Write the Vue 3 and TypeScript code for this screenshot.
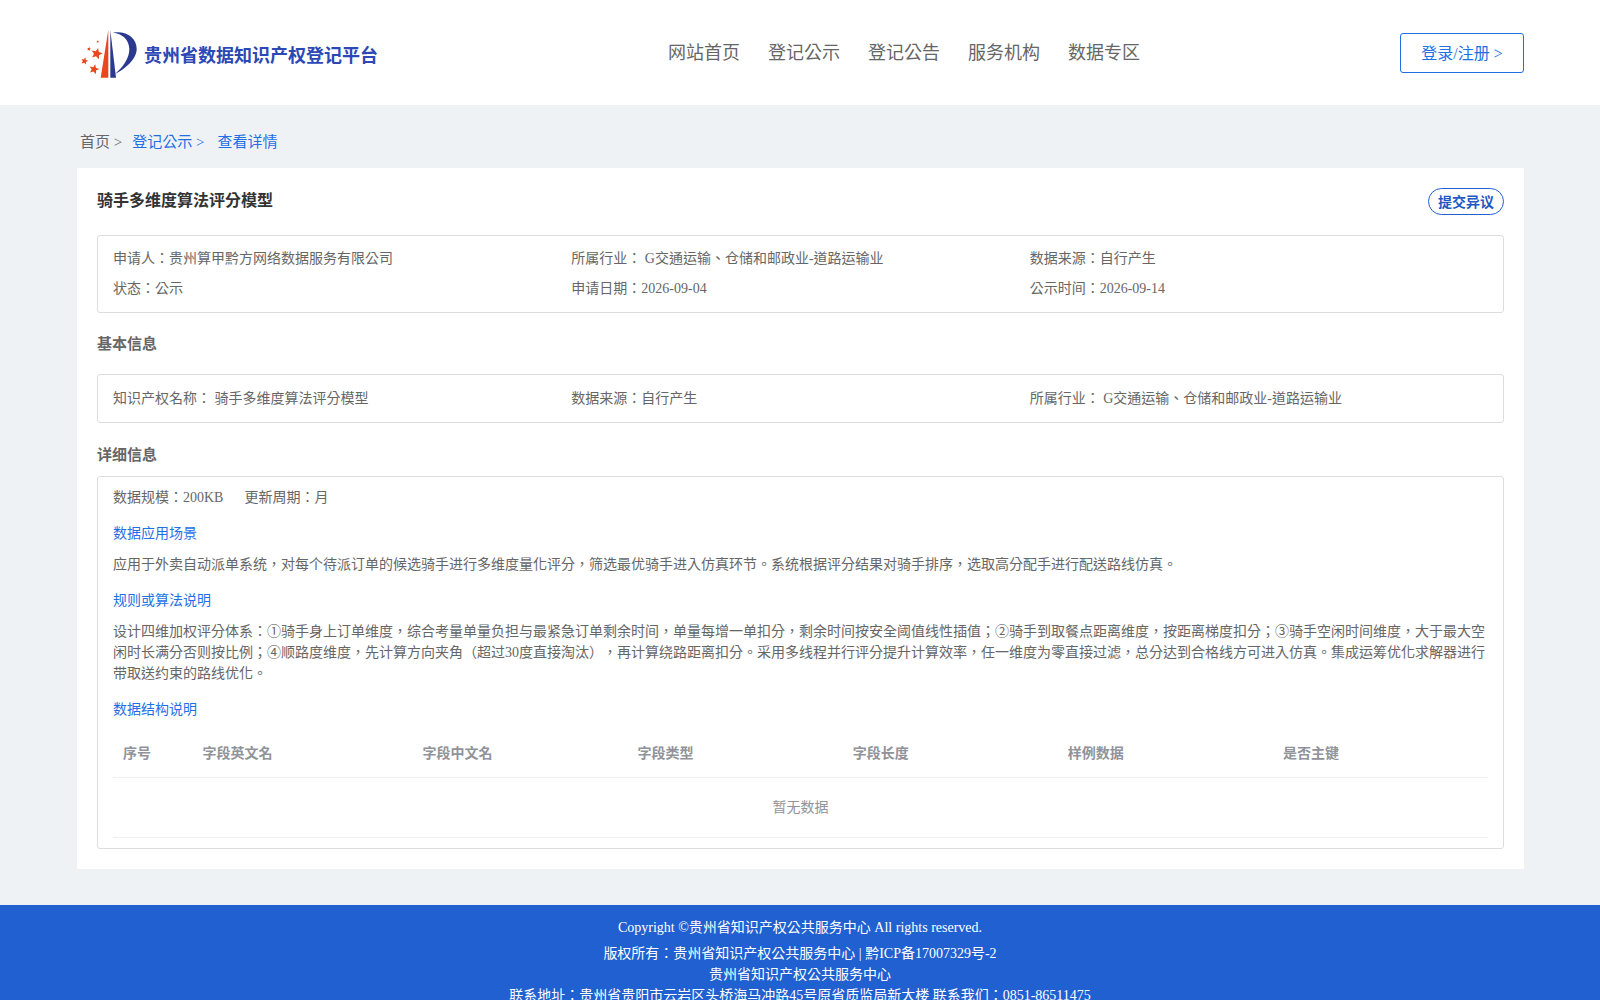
<template>
  <div class="page">
    <header class="header">
      <div class="brand">
        <svg class="logo" viewBox="0 0 60 56" width="60" height="56">
          <path d="M20.700 51.700 L28.300 4 L28.300 51.700 Z" fill="#e8471c" />
          <path d="M30.300 4 L36 51.700 L30.300 51.700 Z" fill="#2b3a8f" />
          <path d="M33 6.500 C47 4.500 56.700 12 56.700 23 C56.700 33 45 43 35 48 C43 41 49.500 32 49.300 23 C49 13 42 8 33 6.500 Z" fill="#2b3a8f" />
          <polygon v-for="s in stars" :key="s.x" :points="starPoints(s.x, s.y, s.r)" fill="#e8471c" />
        </svg>
        <span class="brand-name">贵州省数据知识产权登记平台</span>
      </div>
      <nav class="nav">
        <a v-for="item in navItems" :key="item">{{ item }}</a>
      </nav>
      <button class="login">登录/注册 &gt;</button>
    </header>

    <main class="main">
      <div class="crumbs">
        <span>首页 &gt;</span>
        <span class="link">登记公示 &gt;</span>
        <span class="link last">查看详情</span>
      </div>

      <section class="card">
        <div class="title-row">
          <h1>骑手多维度算法评分模型</h1>
          <button class="objection">提交异议</button>
        </div>

        <div class="box summary">
          <div v-for="text in summary" :key="text">{{ text }}</div>
        </div>

        <h2 class="basic-title">基本信息</h2>
        <div class="box basic">
          <div v-for="text in basic" :key="text">{{ text }}</div>
        </div>

        <h2 class="detail-title">详细信息</h2>
        <div class="box detail">
          <div class="meta"><span>数据规模：200KB</span><span>更新周期：月</span></div>
          <h3>数据应用场景</h3>
          <p>应用于外卖自动派单系统，对每个待派订单的候选骑手进行多维度量化评分，筛选最优骑手进入仿真环节。系统根据评分结果对骑手排序，选取高分配手进行配送路线仿真。</p>
          <h3>规则或算法说明</h3>
          <p>设计四维加权评分体系：①骑手身上订单维度，综合考量单量负担与最紧急订单剩余时间，单量每增一单扣分，剩余时间按安全阈值线性插值；②骑手到取餐点距离维度，按距离梯度扣分；③骑手空闲时间维度，大于最大空闲时长满分否则按比例；④顺路度维度，先计算方向夹角（超过30度直接淘汰），再计算绕路距离扣分。采用多线程并行评分提升计算效率，任一维度为零直接过滤，总分达到合格线方可进入仿真。集成运筹优化求解器进行带取送约束的路线优化。</p>
          <h3>数据结构说明</h3>
          <div class="table">
            <div class="table-head">
              <span v-for="col in columns" :key="col">{{ col }}</span>
            </div>
            <div class="table-empty">暂无数据</div>
          </div>
        </div>
      </section>
    </main>

    <footer class="footer">
      <div class="copyright">Copyright ©贵州省知识产权公共服务中心 All rights reserved.</div>
      <div>版权所有：贵州省知识产权公共服务中心 | 黔ICP备17007329号-2</div>
      <div>贵州省知识产权公共服务中心</div>
      <div>联系地址：贵州省贵阳市云岩区头桥海马冲路45号原省质监局新大楼 联系我们：0851-86511475</div>
    </footer>
  </div>
</template>

<script setup lang="ts">
const navItems = ['网站首页', '登记公示', '登记公告', '服务机构', '数据专区']

const summary = [
  '申请人：贵州算甲黔方网络数据服务有限公司',
  '所属行业： G交通运输、仓储和邮政业-道路运输业',
  '数据来源：自行产生',
  '状态：公示',
  '申请日期：2026-09-04',
  '公示时间：2026-09-14'
]

const basic = [
  '知识产权名称： 骑手多维度算法评分模型',
  '数据来源：自行产生',
  '所属行业： G交通运输、仓储和邮政业-道路运输业'
]

const columns = ['序号', '字段英文名', '字段中文名', '字段类型', '字段长度', '样例数据', '是否主键']

// logo stars, in svg units
const stars = [
  { x: 16.700, y: 27.700, r: 6 },
  { x: 4.500, y: 35, r: 3.800 },
  { x: 14, y: 43.300, r: 5.200 },
  { x: 9, y: 23, r: 2.100 },
  { x: 17.700, y: 15.700, r: 1.400 }
]

const starPoints = (cx: number, cy: number, r: number) => {
  const pts: string[] = []
  for (let i = 0; i < 10; i++) {
    const radius = i % 2 === 0 ? r : r * 0.45
    const angle = -Math.PI / 2 + 0.25 + (i * Math.PI) / 5
    pts.push(`${(cx + radius * Math.cos(angle)).toFixed(2)},${(cy + radius * Math.sin(angle)).toFixed(2)}`)
  }
  return pts.join(' ')
}
</script>

<style>
html,
body {
  margin: 0;
  background: #eff2f5;
}
</style>

<style scoped>
.page {
  font-family: 'Liberation Serif', 'Noto Sans CJK TC', serif;
  font-size: 14px;
  color: #666;
  background: #eff2f5;
  text-spacing-trim: space-all;
}

.header {
  height: 105px;
  box-sizing: border-box;
  padding: 0 76px 0 77px;
  background: #fff;
  display: flex;
  align-items: center;
}

.brand {
  display: flex;
  align-items: center;
  width: 591px;
  padding-left: 3px;
  box-sizing: border-box;
  margin-top: 3px;
}

.logo {
  margin-right: 4px;
  flex: none;
}

.brand-name {
  font-size: 18px;
  font-weight: 700;
  color: #2b48b4;
}

.nav {
  display: flex;
  gap: 28px;
  font-size: 18px;
  color: #666;
  margin-bottom: 3px;
}

.login {
  margin-left: auto;
  width: 124px;
  height: 40px;
  padding: 0 0 2px;
  font: inherit;
  font-size: 16px;
  color: #1f6fe5;
  background: #fff;
  border: 1px solid #1f6fe5;
  border-radius: 3px;
}

.main {
  padding: 0 76px 36px 77px;
}

.crumbs {
  height: 63px;
  box-sizing: border-box;
  padding: 8px 3px 0 3px;
  display: flex;
  align-items: center;
  gap: 10px;
  font-size: 15px;
}

.link {
  color: #1f6fe5;
}

.last {
  margin-left: 3px;
}

.card {
  background: #fff;
  padding: 20px;
}

.title-row {
  display: flex;
  justify-content: space-between;
  align-items: flex-start;
  margin-bottom: 20px;
}

h1 {
  margin: 0;
  font-size: 16px;
  line-height: 26px;
  color: #333;
}

.objection {
  height: 27px;
  width: 76px;
  padding: 0 0 2px;
  font: inherit;
  font-size: 14px;
  font-weight: 700;
  color: #2258c4;
  background: #fff;
  border: 1px solid #2060d0;
  border-radius: 14px;
}

.box {
  border: 1px solid #ddd;
  border-radius: 3px;
  padding: 0 15px;
  line-height: 20px;
}

.summary,
.basic {
  display: grid;
  grid-template-columns: repeat(3, 1fr);
}

.summary {
  row-gap: 10px;
  padding-top: 13px;
  padding-bottom: 13px;
}

.basic {
  padding-top: 14px;
  padding-bottom: 13px;
}

h2 {
  margin: 0;
  font-size: 15px;
  line-height: 20px;
  color: #666;
}

.basic-title {
  margin: 21px 0 20px;
}

.detail-title {
  margin: 22px 0 11px;
}

.detail {
  padding-top: 11px;
  padding-bottom: 10px;
}

.meta {
  display: flex;
  gap: 21px;
}

h3 {
  margin: 16px 0 0;
  font-size: 14px;
  font-weight: 400;
  line-height: 20px;
  color: #1f6fe5;
}

p {
  margin: 10px 0 0;
  line-height: 21px;
}

.table {
  margin-top: 10px;
}

.table-head {
  display: grid;
  grid-template-columns: 79.500px 220px repeat(5, 1fr);
  height: 47px;
  align-items: center;
  border-bottom: 1px solid #ebeef5;
  font-weight: 700;
  color: #909399;
}

.table-head span {
  padding-left: 10px;
}

.table-empty {
  height: 59px;
  line-height: 59px;
  text-align: center;
  color: #909399;
  border-bottom: 1px solid #ebeef5;
}

.footer {
  background: #2060d0;
  color: #fff;
  text-align: center;
  line-height: 21px;
  padding: 12px 0 20px;
}

.copyright {
  margin-bottom: 5px;
}
</style>
